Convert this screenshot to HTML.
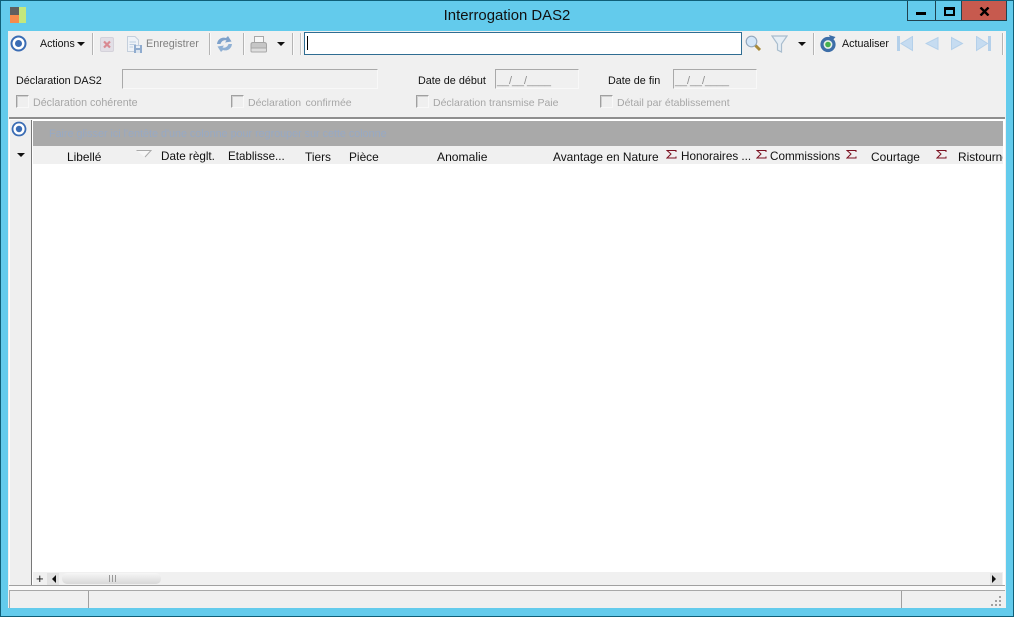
<!DOCTYPE html>
<html lang="fr"><head><meta charset="utf-8"><title>Interrogation DAS2</title>
<style>
html,body{margin:0;padding:0}
body{width:1014px;height:617px;position:relative;overflow:hidden;background:#63cbec;font-family:"Liberation Sans",sans-serif;font-size:10.8px;color:#111}
div,span,svg{position:absolute}
.t{white-space:nowrap;line-height:14px;height:14px}
.g{color:#a6a6a6;font-size:10.5px;top:96px}
.sep{width:1px;height:22px;top:33px;background:#b4b4b4;box-shadow:1px 0 0 #fafafa}
.f{height:20px;box-sizing:border-box;border:1px solid #a9a9a9;border-right-color:#f8f8f8;border-bottom-color:#f8f8f8;background:#f0f0f0}
.c{width:13px;height:13px;top:95px;box-sizing:border-box;border:1px solid #a0a0a0;border-right-color:#f8f8f8;border-bottom-color:#f8f8f8;box-shadow:inset 1px 1px 0 #d0d0d0;background:#efefef}
.h{top:150px;color:#111;font-size:11.9px}
.sg{top:150px}
</style></head><body>
<div style="left:0;top:0;width:1014px;height:617px;box-sizing:border-box;border:1px solid #0f5f78"></div>
<div style="left:10px;top:7px;width:9px;height:8px;background:#5f5f5f"></div>
<div style="left:10px;top:15px;width:9px;height:8px;background:#f58b4c"></div>
<div style="left:19px;top:7px;width:7px;height:16px;background:#c4e77c"></div>
<div class="t" style="left:0;width:1014px;top:8px;text-align:center;font-size:14.9px;line-height:17px;height:17px;color:#111">Interrogation DAS2</div>

<div style="left:907px;top:1px;width:100px;height:20px;box-sizing:border-box;border:1px solid #20424f;border-top:0;background:#63cbec"></div>
<div style="left:935px;top:1px;width:1px;height:20px;background:#20424f"></div>
<div style="left:961px;top:1px;width:46px;height:20px;box-sizing:border-box;border:1px solid #20424f;border-top:0;background:#c75a4e"></div>
<div style="left:916px;top:12px;width:10px;height:3px;background:#000"></div>
<div style="left:944px;top:7px;width:11px;height:9px;box-sizing:border-box;border:2px solid #000;border-top-width:3px"></div>
<svg style="left:979px;top:7px" width="11" height="9"><path d="M1.5 .5 9.5 8.5M9.5 .5 1.5 8.500" stroke="#000" stroke-width="2.4" fill="none"/></svg>

<div style="left:8px;top:31px;width:998px;height:577px;background:#f0f0f0"></div>

<svg style="left:10px;top:35px" width="17" height="17"><circle cx="8.5" cy="8.5" r="7" fill="#fff" stroke="#3a6cb4" stroke-width="2"/><circle cx="8.5" cy="8.5" r="3.5" fill="#3a6cb4"/></svg>
<div class="t" style="left:40px;top:37px;font-size:10.6px">Actions</div>
<svg style="left:77px;top:42px" width="8" height="5"><path d="M0 0H8L4 4Z" fill="#111"/></svg>
<div class="sep" style="left:92px"></div>
<svg style="left:100px;top:37px" width="14" height="15"><rect x=".5" y=".5" width="13" height="14" rx="1.5" fill="#e2dfe6" stroke="#d4d2da"/><path d="M4 4.500 10 10.500M10 4.500 4 10.500" stroke="#d98a92" stroke-width="2.200"/></svg>
<svg style="left:126px;top:36px" width="17" height="17"><path d="M1.500 .5H9L12.500 4V15.500H1.500Z" fill="#eef2f7" stroke="#c4cfdc"/><path d="M3.500 6H10M3.500 8.500H10M3.500 11H7" stroke="#bccde0"/><rect x="8" y="9" width="8" height="8" fill="#8fabce"/><rect x="10" y="9.500" width="4" height="2.500" fill="#e8eef5"/><rect x="10" y="14" width="4" height="3" fill="#dbe4ee"/></svg>
<div class="t" style="left:146px;top:37px;color:#808080">Enregistrer</div>
<div class="sep" style="left:209px"></div>
<svg style="left:216px;top:35px" width="17" height="18"><path d="M1 9C1.500 4 6 1.500 10 3L12 1 15.500 6.500 9 7.500 10.500 5.500C8 4.800 5.500 6 4.500 9Z" fill="#7fa2cb"/><path d="M16 9C15.500 14 11 16.500 7 15L5 17 1.500 11.500 8 10.500 6.500 12.500C9 13.200 11.500 12 12.500 9Z" fill="#8fb0d4"/></svg>
<div class="sep" style="left:243px"></div>
<svg style="left:250px;top:35px" width="18" height="18"><rect x="4.500" y="1.500" width="9" height="6" fill="#f7f7f7" stroke="#a8a8a8"/><path d="M1 13V9.500Q1 7.500 3 7.500H14Q16.500 7.500 16.500 9.500V13Z" fill="#c6c6c6" stroke="#a4a4a4"/><rect x="1" y="13" width="15.500" height="4" rx="1" fill="#dedede" stroke="#a8a8a8"/></svg>
<svg style="left:277px;top:42px" width="8" height="5"><path d="M0 0H8L4 4Z" fill="#111"/></svg>
<div class="sep" style="left:292px"></div>
<div class="sep" style="left:300px;background:#c4c4c4"></div>

<div style="left:304px;top:32px;width:438px;height:23px;box-sizing:border-box;border:1px solid #2f6d92;background:#fff"></div>
<div style="left:307px;top:36px;width:1px;height:14px;background:#000"></div>

<svg style="left:745px;top:35px" width="17" height="18"><circle cx="6.500" cy="6.500" r="5.300" fill="#d3e6f8" stroke="#94a8bd" stroke-width="1.200"/><path d="M10.500 10.500 15 15" stroke="#a88a3a" stroke-width="3"/></svg>
<svg style="left:771px;top:35px" width="17" height="18"><path d="M1 1H16L10.500 9V17L6.500 15V9Z" fill="#e6eef5" stroke="#a9bdce" stroke-width="1.200"/></svg>
<svg style="left:798px;top:42px" width="8" height="5"><path d="M0 0H8L4 4Z" fill="#111"/></svg>
<div class="sep" style="left:813px"></div>
<svg style="left:819px;top:35px" width="18" height="18"><circle cx="9" cy="9.500" r="6" fill="#e8f0e8" stroke="#3d6ea8" stroke-width="3.200"/><circle cx="9" cy="9.500" r="2.800" fill="#45b04e"/><path d="M10 0 16.500 2 12.500 6.500Z" fill="#3d6ea8"/></svg>
<div class="t" style="left:842px;top:37px;font-size:10.7px">Actualiser</div>
<svg style="left:897px;top:36px" width="16" height="16"><rect x="0" y="0" width="3" height="15" fill="#b4d0ea"/><path d="M15.500 .5V14.500L4 7.500Z" fill="#c6dcf1" stroke="#b4d0ea"/></svg>
<svg style="left:925px;top:36px" width="14" height="16"><path d="M13 1.500V13.500L1 7.500Z" fill="#c6dcf1" stroke="#b4d0ea"/></svg>
<svg style="left:951px;top:36px" width="13" height="16"><path d="M.5 1.500V13.500L11.500 7.500Z" fill="#c6dcf1" stroke="#b4d0ea"/></svg>
<svg style="left:976px;top:36px" width="15" height="16"><rect x="12" y="0" width="3" height="15" fill="#b4d0ea"/><path d="M.5 .5V14.500L11.500 7.500Z" fill="#c6dcf1" stroke="#b4d0ea"/></svg>
<div class="sep" style="left:1002px"></div>

<div class="t" style="left:16px;top:74px">Déclaration DAS2</div>
<div class="f" style="left:122px;top:69px;width:256px"></div>
<div class="t" style="left:418px;top:74px">Date de début</div>
<div class="f" style="left:495px;top:69px;width:84px"></div>
<div class="t" style="left:497px;top:74px;color:#8c8c8c">__/__/____</div>
<div class="t" style="left:608px;top:74px">Date de fin</div>
<div class="f" style="left:673px;top:69px;width:84px"></div>
<div class="t" style="left:675px;top:74px;color:#8c8c8c">__/__/____</div>

<div class="c" style="left:16px"></div><div class="t g" style="left:33px;font-size:10.7px">Déclaration cohérente</div>
<div class="c" style="left:231px"></div><div class="t g" style="left:248px;word-spacing:1.5px">Déclaration  confirmée</div>
<div class="c" style="left:416px"></div><div class="t g" style="left:433px">Déclaration transmise Paie</div>
<div class="c" style="left:600px"></div><div class="t g" style="left:617px">Détail par établissement</div>

<div style="left:9px;top:117px;width:996px;height:2px;background:#8e8e8e"></div>
<div style="left:9px;top:119px;width:996px;height:466px;background:#fff"></div>
<div style="left:10px;top:120px;width:21px;height:465px;background:#efefef"></div>
<div style="left:31px;top:120px;width:1px;height:465px;background:#777"></div>
<svg style="left:11px;top:121px" width="17" height="17"><circle cx="8" cy="8" r="6.500" fill="#fff" stroke="#3a6cb4" stroke-width="1.800"/><circle cx="8" cy="8" r="3.200" fill="#3a6cb4"/></svg>
<svg style="left:17px;top:153px" width="8" height="5"><path d="M0 0H8L4 4Z" fill="#111"/></svg>

<div style="left:33px;top:121px;width:970px;height:25px;background:#a9a9a9"></div>
<div class="t" style="left:49px;top:127px;color:#97a9c4;font-size:10.75px">Faire glisser ici l'entête d'une colonne pour regrouper sur cette colonne</div>
<div style="left:33px;top:146px;width:970px;height:18px;background:#f0f0f0"></div>

<div class="t h" style="left:67px">Libellé</div>
<svg style="left:136px;top:150px" width="16" height="8"><path d="M.5 .5H15L8.500 7Z" fill="#f7f7f7"/><path d="M.5 .5H15L9 7" fill="none" stroke="#aaa"/></svg>
<div class="t h" style="left:161px;font-size:11.7px">Date règlt.</div>
<div class="t h" style="left:228px;font-size:11.6px">Etablisse...</div>
<div class="t h" style="left:305px">Tiers</div>
<div class="t h" style="left:349px">Pièce</div>
<div class="t h" style="left:437px;font-size:12.1px">Anomalie</div>
<div class="t h" style="left:553px">Avantage en Nature</div>
<svg class="sg" style="left:666px" width="11" height="9"><path d="M10 2V.5H1L5 4 1 8H10V6.500" fill="none" stroke="#7a1020"/></svg>
<div class="t h" style="left:681px;font-size:11.7px">Honoraires ...</div>
<svg class="sg" style="left:756px" width="11" height="9"><path d="M10 2V.5H1L5 4 1 8H10V6.500" fill="none" stroke="#7a1020"/></svg>
<div class="t h" style="left:770px;font-size:11.7px">Commissions</div>
<svg class="sg" style="left:846px" width="11" height="9"><path d="M10 2V.5H1L5 4 1 8H10V6.500" fill="none" stroke="#7a1020"/></svg>
<div class="t h" style="left:871px">Courtage</div>
<svg class="sg" style="left:936px" width="11" height="9"><path d="M10 2V.5H1L5 4 1 8H10V6.500" fill="none" stroke="#7a1020"/></svg>
<div class="t h" style="left:958px;width:45px;overflow:hidden">Ristourne</div>

<div style="left:33px;top:572px;width:970px;height:13px;background:#f0f0f0"></div>
<div class="t" style="left:36px;top:572px;font-size:13px;line-height:14px">+</div>
<div style="left:47px;top:573px;width:12px;height:12px;background:#e2e2e2"></div>
<svg style="left:52px;top:575px" width="5" height="8"><path d="M4 0V8L0 4Z" fill="#111"/></svg>
<div style="left:62px;top:573px;width:99px;height:11px;border-radius:5px;background:linear-gradient(#f6f6f6,#d8d8d8)"></div>
<div style="left:109px;top:575px;width:7px;height:7px;background:repeating-linear-gradient(90deg,#999 0 1px,transparent 1px 3px)"></div>
<div style="left:990px;top:573px;width:12px;height:12px;background:#e2e2e2"></div>
<svg style="left:992px;top:575px" width="5" height="8"><path d="M0 0V8L4 4Z" fill="#111"/></svg>

<div style="left:9px;top:585px;width:996px;height:1px;background:#a0a0a0"></div>
<div style="left:9px;top:586px;width:996px;height:4px;background:#fafafa"></div>
<div style="left:9px;top:590px;width:996px;height:1px;background:#a8a8a8"></div>
<div style="left:9px;top:591px;width:1px;height:17px;background:#a8a8a8"></div>
<div style="left:88px;top:591px;width:1px;height:17px;background:#a0a0a0"></div>
<div style="left:901px;top:591px;width:1px;height:17px;background:#a0a0a0"></div>
<svg style="left:990px;top:596px" width="12" height="11" fill="#a0a0a0"><rect x="9" y="0" width="2" height="2"/><rect x="5" y="4" width="2" height="2"/><rect x="9" y="4" width="2" height="2"/><rect x="1" y="8" width="2" height="2"/><rect x="5" y="8" width="2" height="2"/><rect x="9" y="8" width="2" height="2"/></svg>
</body></html>
